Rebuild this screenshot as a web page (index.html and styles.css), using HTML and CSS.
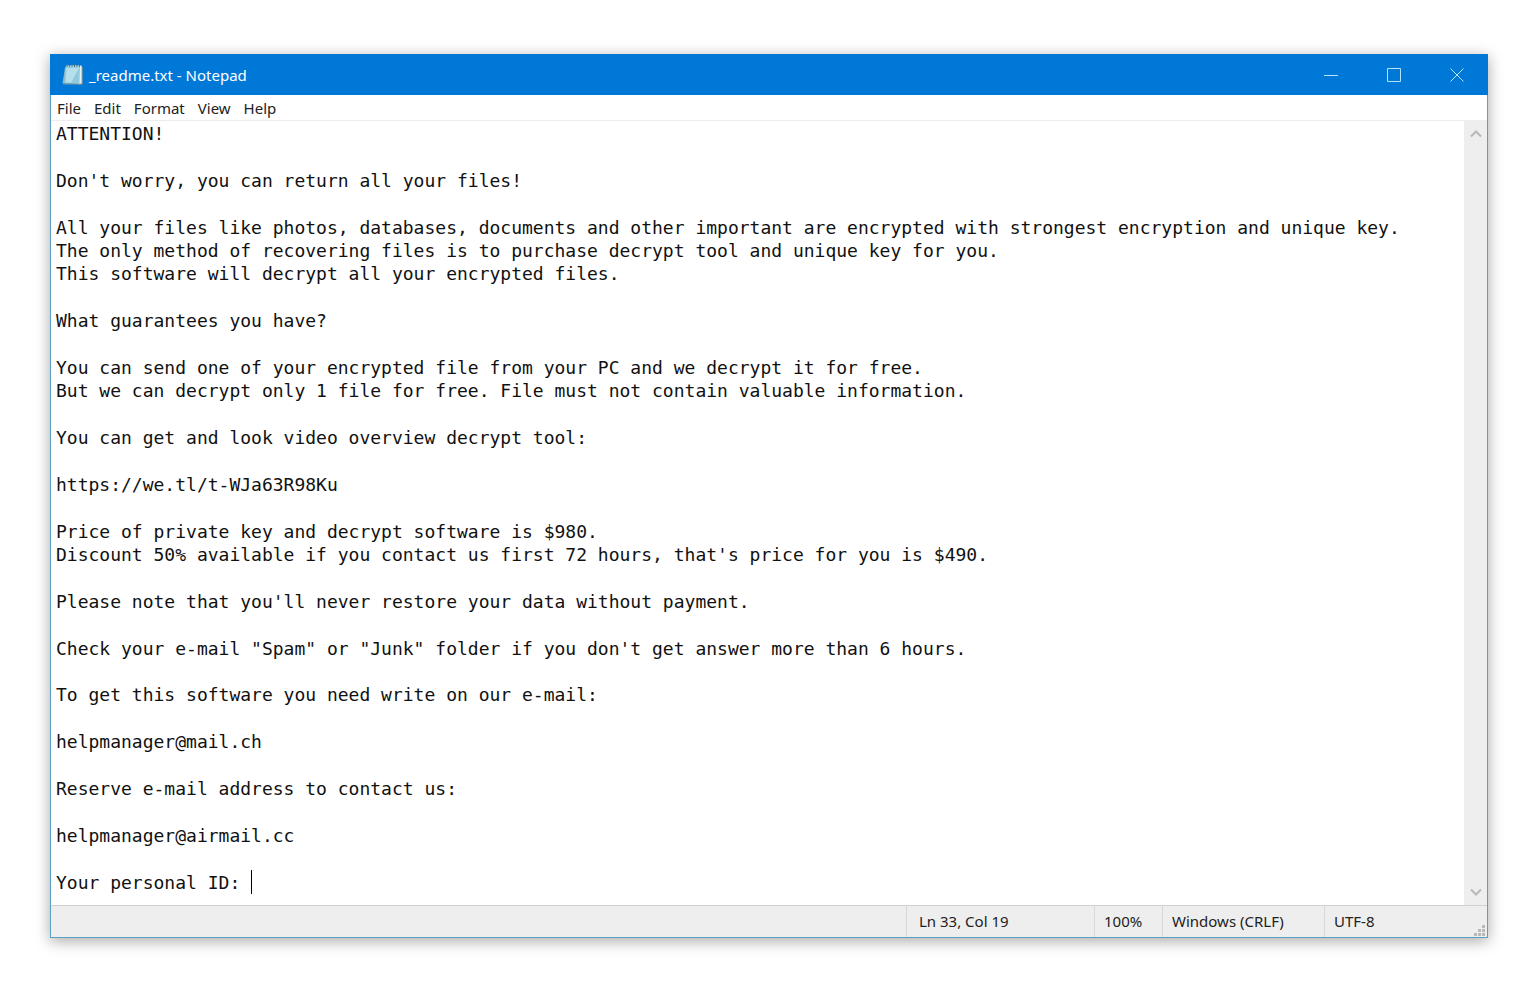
FILE: index.html
```html
<!DOCTYPE html>
<html lang="en">
<head>
  <meta charset="UTF-8">
  <meta name="viewport" content="width=device-width, initial-scale=1.0">
  <title>_readme.txt - Notepad</title>
  <link rel="stylesheet" href="styles.css">
</head>
<body>

  <main class="window">
    <!-- Title bar -->
    <header class="title-bar">
      <svg class="app-icon" width="24" height="24" viewBox="0 0 24 24" aria-hidden="true">
        <path d="M4 4.500L1.500 20.500L17 21L19 4.500Z" fill="#8fb9c6"/>
        <path d="M19.500 3L21.500 4V21.500L17 21.500Z" fill="#a89f80"/>
        <path d="M5 2.500H20.500V20.500H5Z" fill="#e4f3f6"/>
        <path d="M4.500 3.500H19L18.500 20H3.500Z" fill="#8fcbdc"/>
        <path d="M5.500 5H18L10 19.500H4.500Z" fill="#b5dfea"/>
        <path d="M3 20L18 20.500L17.500 21.500H2Z" fill="#6f9eae"/>
        <path d="M6 1.500V4M8.500 1.500V4M11 1.500V4M13.500 1.500V4M16 1.500V4M18.500 1.500V4" stroke="#4d7482"/>
      </svg>
      <h1>_readme.txt - Notepad</h1>
      <div class="window-controls">
        <button type="button" aria-label="Minimize">
          <svg width="14" height="14" viewBox="0 0 14 14"><path d="M0 7.500H14"/></svg>
        </button>
        <button type="button" aria-label="Maximize">
          <svg width="14" height="14" viewBox="0 0 14 14"><path d="M.5.5H13.500V13.500H.5Z"/></svg>
        </button>
        <button type="button" aria-label="Close">
          <svg width="14" height="14" viewBox="0 0 14 14"><path d="M.5.5L13.500 13.500M13.500.5L.5 13.500"/></svg>
        </button>
      </div>
    </header>

    <!-- Menu -->
    <nav class="menu-bar">
      <button type="button">File</button>
      <button type="button">Edit</button>
      <button type="button">Format</button>
      <button type="button">View</button>
      <button type="button">Help</button>
    </nav>

    <!-- Text area and scroll bar -->
    <div class="editor">
      <textarea class="editor-text" rows="33" wrap="off" spellcheck="false" aria-label="Text editor">ATTENTION!

Don't worry, you can return all your files!

All your files like photos, databases, documents and other important are encrypted with strongest encryption and unique key.
The only method of recovering files is to purchase decrypt tool and unique key for you.
This software will decrypt all your encrypted files.

What guarantees you have?

You can send one of your encrypted file from your PC and we decrypt it for free.
But we can decrypt only 1 file for free. File must not contain valuable information.

You can get and look video overview decrypt tool:

https://we.tl/t-WJa63R98Ku

Price of private key and decrypt software is $980.
Discount 50% available if you contact us first 72 hours, that's price for you is $490.

Please note that you'll never restore your data without payment.

Check your e-mail "Spam" or "Junk" folder if you don't get answer more than 6 hours.

To get this software you need write on our e-mail:

helpmanager@mail.ch

Reserve e-mail address to contact us:

helpmanager@airmail.cc

Your personal ID: </textarea>
      <span class="caret"></span>
      <div class="scroll-bar">
        <button type="button" aria-label="Scroll up">
          <svg width="12" height="8" viewBox="0 0 12 8"><path d="M1 6.500L6 1.500L11 6.500"/></svg>
        </button>
        <button type="button" aria-label="Scroll down">
          <svg width="12" height="8" viewBox="0 0 12 8"><path d="M1 1.500L6 6.500L11 1.500"/></svg>
        </button>
      </div>
    </div>

    <!-- Status bar -->
    <footer class="status-bar">
      <span></span>
      <span class="cell position">Ln 33, Col 19</span>
      <span class="cell">100%</span>
      <span class="cell">Windows (CRLF)</span>
      <span class="cell">UTF-8</span>
      <svg class="grip" width="11" height="11" viewBox="0 0 11 11" aria-hidden="true">
        <path d="M8 0h3v3h-3zM4 4h3v3h-3zM8 4h3v3h-3zM0 8h3v3h-3zM4 8h3v3h-3zM8 8h3v3h-3z" fill="#b9b9b9"/>
      </svg>
    </footer>
  </main>

</body>
</html>
```

FILE: styles.css
```css
* {
  margin: 0;
  padding: 0;
  box-sizing: border-box;
}

body {
  font-family: "Segoe UI", "Noto Sans", sans-serif;
  font-size: 15px;
  background-color: #fff;
  color: #222;
  padding: 54px 48px 54px 50px;
}

button {
  font: inherit;
  color: inherit;
  background: none;
  border: none;
}

svg {
  display: block;
}

.window {
  background-color: #fff;
  border: 1px solid #5c9fc4;
  box-shadow: 0 3px 14px rgba(0, 0, 0, 0.35);
}

/* Title bar */
.title-bar {
  display: flex;
  align-items: center;
  height: 41px;
  margin: -1px -1px 0;
  padding-left: 11px;
  background-color: #0078d7;
  color: #fff;
}

.title-bar h1 {
  flex-grow: 1;
  margin-left: 4px;
  font-size: 15px;
  font-weight: normal;
}

.window-controls {
  display: flex;
  height: 100%;
}

.window-controls button {
  display: flex;
  align-items: center;
  justify-content: center;
  width: 63px;
}

.window-controls path {
  fill: none;
  stroke: #b5e3fb;
}

/* Menu */
.menu-bar {
  display: flex;
  gap: 13px;
  height: 26px;
  padding: 0 6px;
  border-bottom: 1px solid #ececec;
}

/* Editor */
.editor {
  position: relative;
  display: flex;
}

.editor-text {
  flex-grow: 1;
  min-width: 0;
  padding: 1px 5px 11px;
  border: none;
  outline: none;
  resize: none;
  overflow: hidden;
  font-family: Consolas, "DejaVu Sans Mono", monospace;
  font-size: 18px;
  line-height: 1.3;
  color: #111;
}

.caret {
  position: absolute;
  left: 200px;
  bottom: 11px;
  width: 1px;
  height: 24px;
  background-color: #000;
}

.scroll-bar {
  display: flex;
  flex-direction: column;
  justify-content: space-between;
  width: 23px;
  background-color: #eee;
}

.scroll-bar button {
  display: flex;
  align-items: center;
  justify-content: center;
  height: 25px;
}

.scroll-bar path {
  fill: none;
  stroke: #b8b8b8;
  stroke-width: 2;
}

/* Status bar */
.status-bar {
  position: relative;
  display: grid;
  grid-template-columns: 1fr 188px 68px 162px 163px;
  height: 32px;
  border-top: 1px solid #d0d0d0;
  background-color: #eee;
}

.cell {
  padding-left: 9px;
  border-left: 1px solid #d9d9d9;
  line-height: 31px;
}

.position {
  padding-left: 12px;
}

.grip {
  position: absolute;
  right: 2px;
  bottom: 1px;
}
```
